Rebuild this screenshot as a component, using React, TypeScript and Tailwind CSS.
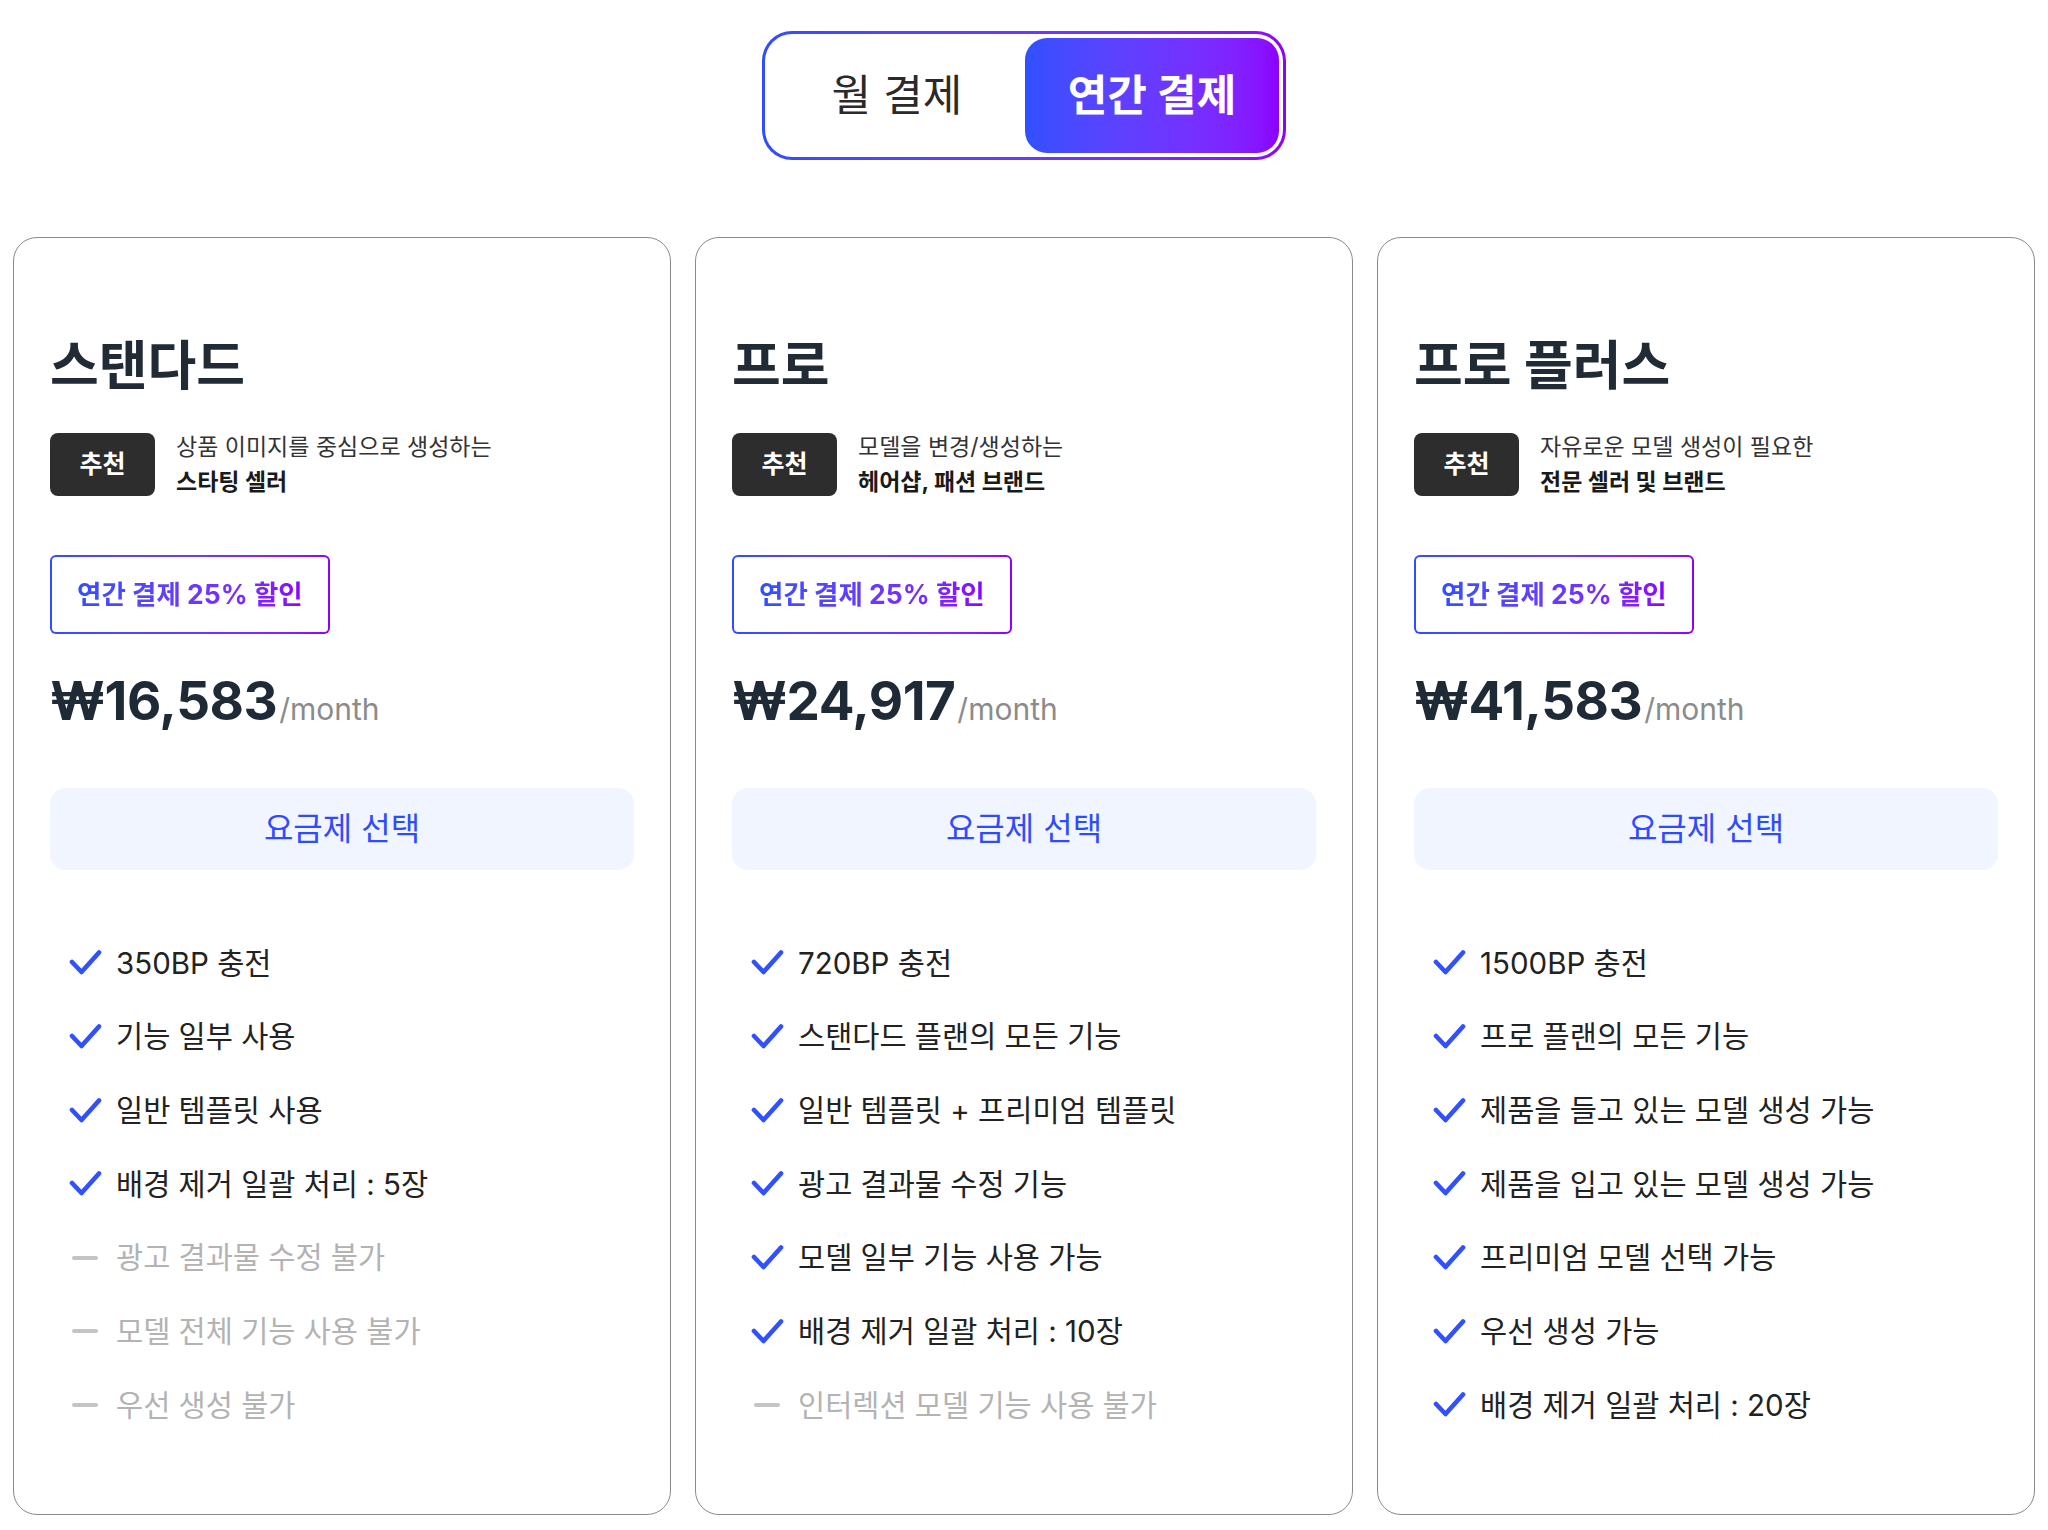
import { useState } from 'react';

type Feature = { text: string; enabled: boolean };

interface Plan {
  name: string;
  desc: string;
  target: string;
  price: string;
  features: Feature[];
}

const plans: Plan[] = [
  {
    name: '스탠다드',
    desc: '상품 이미지를 중심으로 생성하는',
    target: '스타팅 셀러',
    price: '₩16,583',
    features: [
      { text: '350BP 충전', enabled: true },
      { text: '기능 일부 사용', enabled: true },
      { text: '일반 템플릿 사용', enabled: true },
      { text: '배경 제거 일괄 처리 : 5장', enabled: true },
      { text: '광고 결과물 수정 불가', enabled: false },
      { text: '모델 전체 기능 사용 불가', enabled: false },
      { text: '우선 생성 불가', enabled: false },
    ],
  },
  {
    name: '프로',
    desc: '모델을 변경/생성하는',
    target: '헤어샵, 패션 브랜드',
    price: '₩24,917',
    features: [
      { text: '720BP 충전', enabled: true },
      { text: '스탠다드 플랜의 모든 기능', enabled: true },
      { text: '일반 템플릿 + 프리미엄 템플릿', enabled: true },
      { text: '광고 결과물 수정 기능', enabled: true },
      { text: '모델 일부 기능 사용 가능', enabled: true },
      { text: '배경 제거 일괄 처리 : 10장', enabled: true },
      { text: '인터렉션 모델 기능 사용 불가', enabled: false },
    ],
  },
  {
    name: '프로 플러스',
    desc: '자유로운 모델 생성이 필요한',
    target: '전문 셀러 및 브랜드',
    price: '₩41,583',
    features: [
      { text: '1500BP 충전', enabled: true },
      { text: '프로 플랜의 모든 기능', enabled: true },
      { text: '제품을 들고 있는 모델 생성 가능', enabled: true },
      { text: '제품을 입고 있는 모델 생성 가능', enabled: true },
      { text: '프리미엄 모델 선택 가능', enabled: true },
      { text: '우선 생성 가능', enabled: true },
      { text: '배경 제거 일괄 처리 : 20장', enabled: true },
    ],
  },
];

function CheckMark() {
  return (
    <svg width="33" height="27" viewBox="0 0 33 27" fill="none">
      <path
        d="M3 13 L12.5 23 L30 3.5"
        stroke="#3150ff"
        strokeWidth="4.6"
        strokeLinecap="round"
        strokeLinejoin="round"
      />
    </svg>
  );
}

function PlanCard({ plan }: { plan: Plan }) {
  return (
    <div className="rounded-[24px] border border-[#8a8a8a] bg-white px-[36px] pt-[96px] pb-[72px]">
      <h2 className="text-[53px] leading-[64px] font-bold text-[#212b36]">{plan.name}</h2>

      {/* Recommendation */}
      <div className="mt-[35px] flex h-[63px] items-center gap-[21px]">
        <div className="flex h-[63px] w-[105px] shrink-0 items-center justify-center rounded-[8px] bg-[#2d2d2d] text-[25px] font-bold text-white">
          추천
        </div>
        <div className="text-[23px] leading-[35px] text-[#333333]">
          <p>{plan.desc}</p>
          <p className="font-bold text-[#1a1a1a]">{plan.target}</p>
        </div>
      </div>

      {/* Discount */}
      <div className="mt-[59px] w-fit rounded-[6px] bg-linear-to-r from-[#2f4dff] to-[#8f00ff] p-[2px]">
        <div className="flex h-[75px] items-center rounded-[4px] bg-white px-[25px]">
          <span className="bg-linear-to-r from-[#3050ff] to-[#8c00ff] bg-clip-text text-[26.5px] font-bold text-transparent">
            연간 결제 25% 할인
          </span>
        </div>
      </div>

      {/* Price */}
      <div className="mt-[41px] flex items-baseline">
        <span className="text-[53px] leading-none font-bold tracking-[-0.5px] text-[#1f2a37]">{plan.price}</span>
        <span className="ml-[2px] text-[30px] leading-none text-[#8b8b8b]">/month</span>
      </div>

      <button className="mt-[60px] h-[82px] w-full rounded-[16px] bg-[#f1f5ff] text-[32px] text-[#2f4bff]">
        요금제 선택
      </button>

      {/* Features */}
      <ul className="mt-[56px] flex flex-col">
        {plan.features.map((f) => (
          <li key={f.text} className="flex h-[73.7px] items-center gap-[14px] pl-[18px]">
            <span className="flex w-[34px] items-center justify-center">
              {f.enabled ? (
                <CheckMark />
              ) : (
                <span className="h-[4px] w-[26px] rounded-full bg-[#c4c4c4]" />
              )}
            </span>
            <span className={`text-[29.5px] ${f.enabled ? 'text-[#222222]' : 'text-[#b3b3b3]'}`}>{f.text}</span>
          </li>
        ))}
      </ul>
    </div>
  );
}

export default function App() {
  const [billing, setBilling] = useState<'monthly' | 'yearly'>('yearly');

  return (
    <div
      className="min-h-screen bg-white px-[13px] pt-[31px] pb-[18px]"
      style={{ fontFamily: 'Inter, "Noto Sans CJK KR", sans-serif' }}
    >
      {/* Billing toggle */}
      <div className="flex justify-center">
        <div className="rounded-[30px] bg-linear-to-r from-[#2f4dff] to-[#8f00ff] p-[3px]">
          <div className="flex rounded-[27px] bg-white p-[4px]">
            <button
              onClick={() => setBilling('monthly')}
              className={`h-[115px] w-[256px] rounded-[22px] text-[43px] ${
                billing === 'monthly'
                  ? 'bg-linear-to-r from-[#3050ff] to-[#8c00ff] font-bold text-white'
                  : 'font-normal text-[#2a2a2a]'
              }`}
            >
              월 결제
            </button>
            <button
              onClick={() => setBilling('yearly')}
              className={`h-[115px] w-[254px] rounded-[22px] text-[43px] ${
                billing === 'yearly'
                  ? 'bg-linear-to-r from-[#3050ff] to-[#8c00ff] font-bold text-white'
                  : 'font-normal text-[#2a2a2a]'
              }`}
            >
              연간 결제
            </button>
          </div>
        </div>
      </div>

      {/* Plans */}
      <div className="mt-[77px] grid grid-cols-3 gap-[24px]">
        {plans.map((p) => (
          <PlanCard key={p.name} plan={p} />
        ))}
      </div>
    </div>
  );
}
